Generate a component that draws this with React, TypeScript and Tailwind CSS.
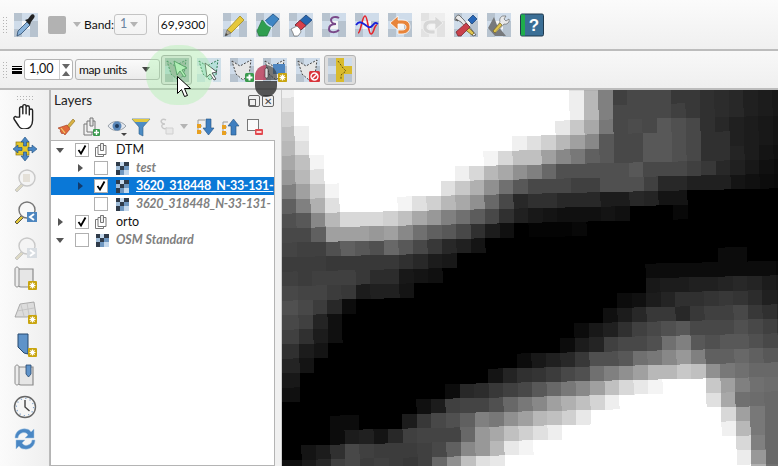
import { ReactNode } from "react";

// grey values of the raster cells (hex, "xx*n" repeats a value), row by row
const RASTER = [
  "f0 ff*19 e0 b0 80 40 40 40 40 38 38 30 2c 28 20 1c 18",
  "e0 ff*19 ee b8 80 40 48 48 48 38 38 30 2c 28 20 1c 18",
  "d0 ff*19 ee b8 80 48 48 48 48 40 38 30 2c 28 20 1c 18",
  "c0 ee ff*17 e8 c8 a8 78 48 4c 48 58 50 48 30 28 20 1c 18 14",
  "b8 e0 ff*14 f0 e0 d0 b8 a0 88 58 48 48 58 58 50 48 30 30 20 1c 18 14",
  "a8 c0 f4 ff*11 f4 d8 c0 c0 a0 88 78 60 58 48 48 58 58 50 48 30 30 24 1c 14 10",
  "98 b8 e0 ff*9 f0 d8 b8 a8 90 80 68 50 50 50 50 50 58 48 48 48 40 38 28 20 18 10 0c",
  "80 a0 c8 f4 ff*7 e0 c8 b0 90 70 58 48 48 48 40 40 50 50 50 40 28 28 20 20 20 14 10 0c 0a",
  "60 80 b0 e0 ff*4 f4 e0 d0 b8 a8 90 68 48 28 30 30 28 28 28 1c 1c 28 24 14 14 00*7",
  "50 58 88 b8 d8 d8 d8 d0 c0 a8 98 80 70 5c 48 30 20 18 14 10 10 10 14 10 00 00 00 08 00*7",
  "48 48 60 a0 a0 a0 98 a0 88 70 60 58 48 30 1c 10 00 04 04 04 08 00*14",
  "44 40 40 50 60 58 50 68 58 48 38 28 20 14 00*21",
  "3c 3c 3c 38 38 38 38 38 30 28 1c 18 00*18 0c 0c 00*3",
  "40 3c 40 40 40 38 2c 2c 18 14 10 00*14 0c*9 08",
  "48 44 44 3c 38 1c 20 20 14 00*16 18 1c 1c 20 20 24 28 24 1c 18",
  "50 48 3c 28 0c 00*18 0c 10 1c 24 30 30 34 38 34 2c 20 1c",
  "48 40 24 10 00*18 10 1c 28 38 38 28 38 40 40 48 38 30 24",
  "40 30 1c 10 00*16 0c 18 20 30 40 48 50 58 48 48 48 50 48 40 34",
  "30 1c 14 00*16 0c 1c 24 40 48 48 50 70 80 58 50 58 58 50 48 40",
  "24 14 00*14 0c 18 20 28 38 50 50 58 70 78 88 98 80 60 60 68 60 58 50",
  "18 00*13 14 24 30 34 3c 48 50 70 80 90 a0 b8 b8 c8 c0 90 78 70 68 68 60",
  "10 00*10 0c 28 2c 38 40 48 58 68 78 88 a0 c0 d8 e8 f4 ff ff ff c8 a0 80 70 6c 68",
  "00*9 10 1c 40 44 44 50 68 78 88 a0 b0 c0 d4 ee ff*6 e0 a8 70 6c 68 60",
  "00*3 0c 0c 00*3 1c 38 48 50 60 80 78 90 a0 b8 c0 d0 e8 ff*9 d8 a0 78 68 60",
  "00*3 0c 1c 20 14 28 40 44 44 44 68 98 a8 c0 d0 e0 ee ff*11 f0 b8 78 68 60",
  "00 14 1c 30 48 40 3c 3c 3c 40 48 60 88 98 b8 e8 f4 ff*14 d8 80 68 60",
  "10 1c 28 40 48 3c 40 3c 38 40 68 90 c0 e0 e8 ff*16 ec 98 68 58",
  "20 28 40 48 48 48 48 40 68 90 c0 f0 ff*20 b0 70 60",
  "20 28 40 48 48 48 48 40 68 90 c0 f0 ff*20 b0 70 60",
];

function parseRow(row: string) {
  const out: string[] = [];
  row.split(" ").forEach((t) => {
    const [v, n] = t.split("*");
    for (let i = 0; i < (n ? Number(n) : 1); i++) out.push(v);
  });
  return out;
}

function MapRaster() {
  return (
    <svg viewBox="282 90 496 376" width="496" height="376" className="block" shapeRendering="crispEdges">
      <rect x="282" y="90" width="496" height="376" fill="#000" />
      <g transform="rotate(-1.26 282 90)">
        {RASTER.map((row, k) =>
          parseRow(row).map((v, c) => (
            <rect
              key={`${k}-${c}`}
              x={c === 0 ? 250 : 279 + 14.5 * c}
              y={83.2 + 14.5 * k}
              width={c === 0 ? 44 : 15}
              height={15}
              fill={`#${v}${v}${v}`}
            />
          )),
        )}
      </g>
    </svg>
  );
}

function Checker({ fade }: { fade?: boolean }) {
  const a = fade ? "#e2e2e2" : "#b7c3cf";
  const b = fade ? "#eeeeee" : "#cfdcea";
  return (
    <>
      <rect x="0" y="0" width="8" height="8" fill={a} />
      <rect x="8" y="0" width="8" height="8" fill={b} />
      <rect x="16" y="0" width="8" height="8" fill={b} />
      <rect x="0" y="8" width="8" height="8" fill={b} />
      <rect x="16" y="8" width="8" height="8" fill={a} />
      <rect x="0" y="16" width="8" height="8" fill={a} />
      <rect x="8" y="16" width="8" height="8" fill={b} />
      <rect x="16" y="16" width="8" height="8" fill={a} />
    </>
  );
}

function Icon({ children, checker = true, fade, size = 24 }: { children?: ReactNode; checker?: boolean; fade?: boolean; size?: number }) {
  return (
    <svg viewBox="0 0 24 24" width={size} height={size} className="block shrink-0">
      {checker && <Checker fade={fade} />}
      {children}
    </svg>
  );
}

const Badge = ({ color = "#c9a50f" }: { color?: string }) => (
  <g>
    <rect x="15" y="15" width="9" height="9" rx="1" fill={color} />
    <path d="M19.5 16.5v6M16.5 19.5h6M17.4 17.4l4.2 4.2M21.6 17.4l-4.2 4.2" stroke="#fff" strokeWidth="1.2" />
  </g>
);

const DashedShape = () => (
  <path d="M2 3l8 5 11-6-2 15-6 5-7-6z" fill="#e6e6e6" stroke="#444" strokeWidth="1" strokeDasharray="2 1.5" />
);

const TopIcons = [
  // pencil
  <Icon key="pencil">
    <path d="M4 17L17 3l4 4L8 20z" fill="#e6c83c" stroke="#a38c1e" strokeWidth="0.8" />
    <path d="M4 17l-2 6 6-3z" fill="#b0a890" stroke="#666" strokeWidth="0.6" />
    <path d="M2 23l1-3 2 2z" fill="#444" />
  </Icon>,
  // toggle editing
  <Icon key="edit">
    <path d="M1 18l5-11 9 7-4 9H3z" fill="#2f9e4f" stroke="#1d6b33" strokeWidth="0.6" />
    <path d="M9 8l8-7 6 5-7 8z" fill="#3f86c4" stroke="#1e4f80" strokeWidth="0.8" />
    <path d="M9 8c1 3 4 5 7 6" fill="none" stroke="#bde0f5" strokeWidth="1.4" />
  </Icon>,
  // eraser
  <Icon key="eraser">
    <path d="M6 12l11-10 6 5-11 10z" fill="#2767b0" stroke="#123a6b" strokeWidth="0.7" />
    <path d="M6 12l5-4.6 6 5L12 17z" fill="#d8404a" stroke="#7e1f26" strokeWidth="0.7" />
    <path d="M2 16l6-3 3 3 1 3-3 4H5l-1-3z" fill="#fff" stroke="#555" strokeWidth="0.6" />
  </Icon>,
  // epsilon
  <Icon key="eps">
    <path d="M17 5c-3-2-8-1-8 2 0 3 3 4 5 4-3 0-7 1-7 5 0 4 7 4 10 1" fill="none" stroke="#7a4a8a" strokeWidth="2" />
  </Icon>,
  // curve
  <Icon key="wave">
    <path d="M3 20c3 0 4-17 7-17s3 18 6 18c3 0 3-9 6-9" fill="none" stroke="#e4262c" strokeWidth="1.6" />
    <path d="M1 12c3-4 5-3 8-1s5 5 8 2 3-4 6-2" fill="none" stroke="#1820d8" strokeWidth="1.8" />
  </Icon>,
  // undo
  <Icon key="undo">
    <path d="M2 10l8-7v4h4c6 0 8 3 8 7s-3 7-8 7h-4v-4h4c3 0 4-1 4-3s-2-3-4-3h-4v6z" fill="#e8843a" stroke="#fff" strokeWidth="0.8" />
  </Icon>,
  // redo, disabled
  <Icon key="redo" fade>
    <path d="M22 10l-8-7v4h-4c-6 0-8 3-8 7s3 7 8 7h4v-4h-4c-3 0-4-1-4-3s2-3 4-3h4v6z" fill="#d6d6d6" stroke="#f2f2f2" strokeWidth="0.8" />
  </Icon>,
  // tools
  <Icon key="tools">
    <path d="M5 2l5 5 12 15-3 1L7 9 2 6 4 8l-3-1c0-3 2-5 4-5z" fill="#e8e8e8" stroke="#444" strokeWidth="0.7" />
    <path d="M9 15l3-3 8 8-2 2z" fill="#e0c450" stroke="#6b5a10" strokeWidth="0.7" />
    <path d="M14 7l5-5 4 4-5 5z" fill="#2767b8" stroke="#123a6b" strokeWidth="0.7" />
    <path d="M2 19l10-9 4 4-9 9H4z" fill="#c9414b" stroke="#6e1f26" strokeWidth="0.7" />
  </Icon>,
  // settings
  <Icon key="wrench">
    <path d="M1 15l6-11 3 8 9 11H8z" fill="#77797c" />
    <path d="M16 3l3 0-2 3 2 2 3-2c1 3-2 6-5 5L9 20l-3-2 7-9c-1-3 1-6 3-6z" fill="#e9e9e9" stroke="#555" strokeWidth="0.6" />
    <path d="M6 18l7-8 2 2-7 8z" fill="#e0c450" stroke="#6b5a10" strokeWidth="0.6" />
  </Icon>,
  // help
  <Icon key="help" checker={false}>
    <rect x="0.5" y="1" width="23" height="22" rx="1.5" fill="#3b6f96" stroke="#203a4e" />
    <rect x="1" y="1.5" width="4" height="21" fill="#1fae4c" />
    <text x="14" y="18" fontSize="17" fontWeight="700" textAnchor="middle" fill="#fff" fontFamily="'Liberation Sans', sans-serif">?</text>
  </Icon>,
];

function Grip({ horizontal }: { horizontal?: boolean }) {
  const dots = Array.from({ length: 6 });
  return (
    <div className={horizontal ? "flex flex-col gap-[2px]" : "flex gap-[2px]"}>
      {[0, 1].map((i) => (
        <div key={i} className={horizontal ? "flex gap-[2px]" : "flex flex-col gap-[2px]"}>
          {dots.map((_, j) => (
            <div key={j} className="w-px h-px bg-[#b4b4b4]" />
          ))}
        </div>
      ))}
    </div>
  );
}

function Caret({ color = "#555" }: { color?: string }) {
  return (
    <svg viewBox="0 0 8 5" width="8" height="5" className="block shrink-0">
      <path d="M0 0h8L4 5z" fill={color} />
    </svg>
  );
}

function SelectIcon({ solid }: { solid?: boolean }) {
  return (
    <Icon checker={false}>
      <rect x="0" y="0" width="24" height="24" fill={solid ? "#a7b8b4" : "#cfdfe8"} />
      <rect x="0" y="8" width="8" height="8" fill={solid ? "#b5d5d5" : "#e9eef2"} />
      <rect x="8" y="16" width="8" height="8" fill={solid ? "#b5c9c5" : "#e9eef2"} />
      <path d="M2 3l8 5 11-6-2 15-6 5-7-6z" fill={solid ? "#98aaa0" : "#b6e0da"} stroke="#2c7a50" strokeWidth="1" strokeDasharray="2 1.5" />
      <path d={solid ? "M9 3l13 7-5 2 4 6-2 1-4-6-3 4z" : "M8 5l12 9-5 1 4 6-2 1-4-6-3 3z"} fill={solid ? "#b9eec0" : "#fff"} stroke={solid ? "#1f6b3a" : "#333"} strokeWidth="0.8" />
    </Icon>
  );
}

function ExtraToolbar() {
  return (
    <div className="flex items-center h-[37px]">
      <div className="ml-[3px]">
        <Grip />
      </div>
      <div className="ml-[5px] w-[10px] flex flex-col gap-[1px]">
        <div className="h-[1px] bg-black" />
        <div className="h-[2px] bg-black" />
        <div className="h-[3px] bg-black" />
      </div>
      <div className="ml-[2px] w-[49px] h-[21px] flex items-center bg-white border border-[#b4b4b4] rounded-[3px]">
        <span className="pl-[4px] flex-1 text-[12.5px] text-[#111]">1,00</span>
        <div className="w-[13px] h-full border-l border-[#cfcfcf] flex flex-col items-center justify-center gap-[2px]">
          <Caret color="#666" />
          <div className="rotate-180 h-[5px]">
            <Caret color="#666" />
          </div>
        </div>
      </div>
      <div className="ml-[2px] w-[85px] h-[21px] flex items-center justify-between pl-[3px] pr-[9px] bg-linear-to-b from-[#fafafa] to-[#ebebeb] border border-[#b4b4b4] rounded-[3px]">
        <span className="text-[12px] tracking-[-0.4px] text-[#111]">map units</span>
        <Caret color="#444" />
      </div>
      <div className="ml-[1px] w-[31px] h-[30px] flex items-center justify-center bg-[#e2e2e2] border border-[#a8a8a8] rounded-[3px]">
        <SelectIcon solid />
      </div>
      <div className="ml-[5px]">
        <SelectIcon />
      </div>
      <div className="ml-[9px]">
        <Icon>
          <DashedShape />
          <rect x="15" y="15" width="9" height="9" rx="1.5" fill="#3a9a4e" />
          <path d="M19.5 16.5v6M16.5 19.5h6" stroke="#fff" strokeWidth="2" />
        </Icon>
      </div>
      <div className="ml-[9px]">
        <Icon>
          <DashedShape />
          <rect x="10" y="6" width="12" height="10" fill="#4f86c0" />
          <Badge />
        </Icon>
      </div>
      <div className="ml-[9px]">
        <Icon>
          <DashedShape />
          <rect x="13" y="13" width="11" height="11" rx="1.5" fill="#d9343a" />
          <circle cx="18.5" cy="18.5" r="3.5" fill="none" stroke="#fff" strokeWidth="1.4" />
          <path d="M16 21l5-5" stroke="#fff" strokeWidth="1.4" />
        </Icon>
      </div>
      <div className="ml-[4px] w-[32px] h-[30px] flex items-center justify-center bg-[#dedede] border border-[#b4b4b4] rounded-[3px]">
        <Icon>
          <path d="M8 0h8v8h8v8h-8v8H8z" fill="#d9bb2e" />
          <path d="M10 3l5 7 3 3-5 4v4" fill="none" stroke="#443a08" strokeWidth="0.8" strokeDasharray="2 1.5" />
        </Icon>
      </div>
    </div>
  );
}

function Magnifier({ dim, children }: { dim?: boolean; children?: ReactNode }) {
  return (
    <Icon checker={false}>
      <path d="M9 14l-7 7 2 2 7-7z" fill={dim ? "#dcd8c4" : "#e2c63a"} stroke={dim ? "#bbb" : "#222"} strokeWidth="0.7" />
      <circle cx="14" cy="9" r="8" fill={dim ? "#f4f4f4" : "#f8f8f8"} stroke={dim ? "#c8c8c8" : "#777"} strokeWidth="1.4" />
      {children}
    </Icon>
  );
}

function ScrollShape() {
  return (
    <g>
      <path d="M5 3h15v18H8c-2 0-3-1-3-2z" fill="#e6e6e6" stroke="#8c8c8c" strokeWidth="1.2" />
      <path d="M2 3c0-1 1-2 2-2s2 1 2 2v16c0 1-1 2-2 2s-2-1-2-2z" fill="#ececec" stroke="#8c8c8c" strokeWidth="1" />
    </g>
  );
}

function LeftToolbar() {
  return (
    <div className="w-[51px] shrink-0 flex flex-col items-center bg-linear-to-r from-[#fbfbfb] to-[#efefef] border-r-2 border-[#b9b9b9]">
      <div className="mt-[6px]">
        <Grip horizontal />
      </div>
      <div className="mt-[3px]">
        <Icon checker={false} size={26}>
          <path d="M7 13V5c0-2 3-2 3 0v5-7c0-2 3-2 3 0v7-6c0-2 3-2 3 0v7-4c0-2 3-2 3 0v9c0 5-3 8-7 8-3 0-5-1-6-3l-4-6c-1-2 1-3 2-2z" fill="#fff" stroke="#222" strokeWidth="1.3" strokeLinejoin="round" />
        </Icon>
      </div>
      <div className="mt-[8px]">
        <Icon checker={false}>
          <rect x="3" y="5" width="13" height="13" fill="#e6c82a" stroke="#8a7610" strokeWidth="0.7" />
          <path d="M12 0l4 5h-2.500v4h-3V5H8zM12 24l4-5h-2.500v-4h-3v4H8zM0 12l5-4v2.500h4v3H5V16zM24 12l-5-4v2.500h-4v3h4V16z" fill="#4a87c4" stroke="#1f4e7d" strokeWidth="0.6" />
        </Icon>
      </div>
      <div className="mt-[8px]">
        <Magnifier dim>
          <rect x="10" y="5" width="7" height="8" fill="#e4e0d8" />
        </Magnifier>
      </div>
      <div className="mt-[8px]">
        <Magnifier>
          <rect x="14" y="11" width="10" height="10" fill="#4d86bf" />
          <path d="M21 13l-4 3 4 3" fill="none" stroke="#fff" strokeWidth="2" />
        </Magnifier>
      </div>
      <div className="mt-[12px]">
        <Magnifier dim>
          <rect x="14" y="11" width="10" height="10" fill="#d8dde2" />
          <path d="M17 13l4 3-4 3" fill="none" stroke="#fff" strokeWidth="2" />
        </Magnifier>
      </div>
      <div className="mt-[5px]">
        <Icon checker={false}>
          <ScrollShape />
          <Badge />
        </Icon>
      </div>
      <div className="mt-[10px]">
        <Icon checker={false}>
          <path d="M2 17l5-13 14-2 2 13-9 2z" fill="#dcdcdc" stroke="#9a9a9a" strokeWidth="0.8" />
          <path d="M8 5l3 11M14 3l2 12M4 11l17-3" stroke="#bcbcbc" strokeWidth="0.7" />
          <Badge />
        </Icon>
      </div>
      <div className="mt-[9px]">
        <Icon checker={false}>
          <path d="M5 1h10v20l-4-1-6-6z" fill="#5f93c9" stroke="#26486e" strokeWidth="1" />
          <Badge />
        </Icon>
      </div>
      <div className="mt-[7px]">
        <Icon checker={false}>
          <ScrollShape />
          <path d="M13 1h5v9l-2.500 3-2.500-3z" fill="#5f93c9" stroke="#26486e" strokeWidth="0.8" />
        </Icon>
      </div>
      <div className="mt-[7px]">
        <Icon checker={false}>
          <circle cx="12" cy="12" r="10.5" fill="#f6f6f6" stroke="#666" strokeWidth="1.4" />
          <circle cx="12" cy="12" r="8.6" fill="none" stroke="#7ca0c8" strokeWidth="1.2" strokeDasharray="1.2 3.3" />
          <path d="M12 5v7l4.500 4" fill="none" stroke="#444" strokeWidth="1.4" />
        </Icon>
      </div>
      <div className="mt-[8px]">
        <Icon checker={false}>
          <path d="M2 11c0-6 5-10 11-9 2 0 4 1 5 3l3-3v9h-9l3-3c-2-3-5-3-8-1-1 1-2 2-2 4z" fill="#4a87c4" stroke="#9cc0e0" strokeWidth="0.5" />
          <path d="M22 13c0 6-5 10-11 9-2 0-4-1-5-3l-3 3v-9h9l-3 3c2 3 5 3 8 1 1-1 2-2 2-4z" fill="#4a87c4" stroke="#9cc0e0" strokeWidth="0.5" />
        </Icon>
      </div>
    </div>
  );
}

function PanelIcon({ children }: { children: ReactNode }) {
  return (
    <svg viewBox="0 0 20 20" width="20" height="20" className="block shrink-0">
      {children}
    </svg>
  );
}

function PanelToolbar() {
  return (
    <div className="h-[27px] flex items-center pl-[4px]">
      <div className="ml-[1px]">
        <PanelIcon>
          <path d="M11 9l6-7 2 2-6 7z" fill="#d9b243" stroke="#8a6a1c" strokeWidth="0.6" />
          <path d="M2 11l9-3 3 4-5 6-2-2-1 1-2-3 1-1z" fill="#e06a3a" stroke="#a23c20" strokeWidth="0.6" />
          <path d="M5 11l4 5" stroke="#f0d070" strokeWidth="1.2" />
        </PanelIcon>
      </div>
      <div className="ml-[5px]">
        <PanelIcon>
          <path d="M3 7h8v11H3z" fill="#f2f2f2" stroke="#777" />
          <path d="M6 4h8v11H6z" fill="#f2f2f2" stroke="#777" />
          <path d="M9 1h3v8H9z" fill="#e8e8e8" stroke="#777" />
          <rect x="12" y="12" width="7" height="7" rx="1" fill="#3a9a4e" />
          <path d="M15.500 13v5M13 15.500h5" stroke="#fff" strokeWidth="1.4" />
        </PanelIcon>
      </div>
      <div className="ml-[6px] relative">
        <PanelIcon>
          <path d="M1 9c4-6 13-6 18 0-5 6-14 6-18 0z" fill="#e4e8ee" stroke="#9aa2aa" />
          <circle cx="10" cy="9" r="4.500" fill="#5886b8" />
          <circle cx="10" cy="9" r="2" fill="#1e3a5c" />
          <path d="M14 16h6l-3 3z" fill="#444" />
        </PanelIcon>
      </div>
      <div className="ml-[4px]">
        <PanelIcon>
          <path d="M1 2h18l-7 8v9l-4-2v-7z" fill="#4c8cc4" stroke="#2c5e8c" strokeWidth="0.6" />
          <path d="M1 2h18l-3 3H4z" fill="#e2c840" />
        </PanelIcon>
      </div>
      <div className="ml-[6px]">
        <PanelIcon>
          <path d="M9 3C5 1 3 4 5 6c1 1 2 1 3 1-2 0-4 1-3 3 1 2 3 2 5 1" fill="none" stroke="#c8c8c8" strokeWidth="1.4" />
          <path d="M9 11h7v6H9z" fill="#e8e8e8" stroke="#d0d0d0" />
        </PanelIcon>
      </div>
      <div className="ml-[3px]">
        <Caret color="#b4b4b4" />
      </div>
      <div className="ml-[8px]">
        <PanelIcon>
          <path d="M2 3h7M2 3v14M2 9h4M2 15h4" stroke="#999" fill="none" />
          <rect x="1" y="7" width="4" height="4" fill="#e8a020" />
          <rect x="1" y="13" width="4" height="4" fill="#e8a020" />
          <path d="M10 2h5v9h3l-5.500 7L7 11h3z" fill="#3f7fc0" stroke="#24507e" strokeWidth="0.6" />
        </PanelIcon>
      </div>
      <div className="ml-[5px]">
        <PanelIcon>
          <path d="M2 5h5M2 5v13M2 10h4M2 16h4" stroke="#999" fill="none" />
          <rect x="1" y="8" width="4" height="4" fill="#e8a020" />
          <rect x="1" y="14" width="4" height="4" fill="#e8a020" />
          <path d="M10 18h5V9h3l-5.500-7L7 9h3z" fill="#3f7fc0" stroke="#24507e" strokeWidth="0.6" />
        </PanelIcon>
      </div>
      <div className="ml-[4px]">
        <PanelIcon>
          <rect x="2.500" y="2.500" width="11" height="11" fill="#fafafa" stroke="#777" />
          <rect x="10" y="12" width="8" height="6" rx="1" fill="#e2484e" />
          <path d="M11.500 15h5" stroke="#fff" strokeWidth="1.6" />
        </PanelIcon>
      </div>
    </div>
  );
}

function RasterGlyph() {
  return (
    <svg viewBox="0 0 13 13" width="13" height="13" className="block shrink-0">
      <rect x="0" y="0" width="4" height="4" fill="#2f3b4a" />
      <rect x="4" y="0" width="4" height="4" fill="#c4d8ec" />
      <rect x="8" y="0" width="5" height="4" fill="#2f3b4a" />
      <rect x="0" y="4" width="4" height="4" fill="#9fbcd8" />
      <rect x="4" y="4" width="4" height="4" fill="#2f3b4a" />
      <rect x="8" y="4" width="5" height="4" fill="#6f97c0" />
      <rect x="0" y="8" width="4" height="5" fill="#2f3b4a" />
      <rect x="4" y="8" width="4" height="5" fill="#6f97c0" />
      <rect x="8" y="8" width="5" height="5" fill="#c4d8ec" />
    </svg>
  );
}

function GroupGlyph() {
  return (
    <svg viewBox="0 0 14 14" width="14" height="14" className="block shrink-0">
      <path d="M.5 4.500h8v9h-8z" fill="#fff" stroke="#777" />
      <path d="M3 2.500h8v9H3z" fill="#fff" stroke="#777" />
      <path d="M5.500.5h3v7h-3z" fill="#eee" stroke="#777" />
    </svg>
  );
}

function Arrow({ dir, dark }: { dir?: "down" | "right"; dark?: boolean }) {
  return (
    <div className="w-[8px] flex justify-center shrink-0">
      {dir === "down" && (
        <svg viewBox="0 0 8 5" width="8" height="5" className="block">
          <path d="M0 0h8L4 5z" fill="#555" />
        </svg>
      )}
      {dir === "right" && (
        <svg viewBox="0 0 5 8" width="5" height="8" className="block">
          <path d="M0 0l5 4-5 4z" fill={dark ? "#123a6b" : "#555"} />
        </svg>
      )}
    </div>
  );
}

function Check({ on }: { on?: boolean }) {
  return (
    <div className="w-[14px] h-[14px] shrink-0 bg-white border border-[#b0b0b0] flex items-center justify-center">
      {on && (
        <svg viewBox="0 0 12 12" width="12" height="12" className="block">
          <path d="M2.500 6l2.500 3.500L9.500 1.500" fill="none" stroke="#000" strokeWidth="1.8" />
        </svg>
      )}
    </div>
  );
}

type RowProps = {
  child?: boolean;
  dir?: "down" | "right";
  on?: boolean;
  glyph: "raster" | "group";
  label: string;
  tone?: "group" | "off" | "selected";
  tight?: boolean;
};

function LayerRow({ child, dir, on, glyph, label, tone = "group", tight }: RowProps) {
  const isSel = tone === "selected";
  const text =
    tone === "group"
      ? "text-[#111] font-normal"
      : tone === "off"
        ? "text-[#808080] font-bold italic"
        : "text-white font-bold underline";
  return (
    <div className={`h-[18px] flex items-center overflow-hidden whitespace-nowrap ${isSel ? "bg-[#0a78d7]" : ""} ${child ? "pl-[25px]" : "pl-[5px]"}`}>
      <Arrow dir={dir} dark={isSel} />
      <div className={child ? "ml-[10px]" : "ml-[11px]"}>
        <Check on={on} />
      </div>
      <div className={child ? "ml-[8px]" : glyph === "group" ? "ml-[6px]" : "ml-[7px]"}>{glyph === "group" ? <GroupGlyph /> : <RasterGlyph />}</div>
      <span className={`ml-[7px] mt-[-1px] text-[12.5px] leading-[18px] ${tight ? "tracking-[-0.32px]" : ""} ${text}`}>{label}</span>
    </div>
  );
}

function LayersPanel() {
  return (
    <div className="w-[230px] shrink-0 flex flex-col bg-[#f0f0f0]">
      <div className="h-[23px] flex items-center justify-between pl-[3px] pr-[2px] w-[225px]">
        <span className="text-[13.5px] text-[#222] mt-[-2px]">Layers</span>
        <div className="flex gap-[2px] mt-[-2px]">
          <div className="w-[12px] h-[12px] border border-[#666] rounded-[2px] flex items-end justify-start">
            <div className="w-[7px] h-[7px] border border-[#666] bg-[#f0f0f0]" />
          </div>
          <div className="w-[12px] h-[12px] border border-[#666] rounded-[2px] flex items-center justify-center text-[10px] leading-none text-[#444]">
            ✕
          </div>
        </div>
      </div>
      <PanelToolbar />
      <div className="w-[225px] flex-1 bg-white border border-[#b4b4b4] ml-[-1px] overflow-hidden">
        <LayerRow dir="down" on glyph="group" label="DTM" />
        <LayerRow child dir="right" glyph="raster" label="test" tone="off" />
        <LayerRow child dir="right" on glyph="raster" label="3620_318448_N-33-131-" tone="selected" tight />
        <LayerRow child glyph="raster" label="3620_318448_N-33-131-" tone="off" tight />
        <LayerRow dir="right" on glyph="group" label="orto" />
        <LayerRow dir="down" glyph="raster" label="OSM Standard" tone="off" />
      </div>
    </div>
  );
}

export default function App() {
  return (
    <div className="relative w-[778px] h-[466px] overflow-hidden flex flex-col bg-[#f0f0f0] font-['Lato',sans-serif]">
      {/* digitizing toolbar */}
      <div className="h-[49px] flex items-center bg-linear-to-b from-[#fbfbfb] to-[#f0f0f0]">
        <div className="ml-[3px]">
          <Grip />
        </div>
        <div className="ml-[7px]">
          <Icon>
            <path d="M4 18L13 9l3 3-9 9-4 2z" fill="#8ab4dc" stroke="#2c4a6c" strokeWidth="0.8" />
            <path d="M11 7l3-1 3-4c2-2 5 1 3 3l-3 4-1 3z" fill="#222" />
          </Icon>
        </div>
        <div className="ml-[10px] w-[18px] h-[18px] rounded-[2px] bg-[#b2b2b2]" />
        <div className="ml-[7px]">
          <Caret color="#b4b4b4" />
        </div>
        <span className="ml-[3px] w-[27px] text-[12px] whitespace-nowrap text-[#111]">Band:</span>
        <div className="ml-[3px] w-[33px] h-[21px] flex items-center justify-between pl-[5px] pr-[8px] border border-[#c4c4c4] rounded-[3px]">
          <span className="text-[12.5px] text-[#6c84a0]">1</span>
          <Caret color="#b4b4b4" />
        </div>
        <div className="ml-[11px] w-[50px] h-[21px] flex items-center justify-center bg-white border border-[#b4b4b4] rounded-[3px]">
          <span className="text-[12px] text-[#111]">69,9300</span>
        </div>
        <div className="ml-[15px] flex gap-[9px]">{TopIcons}</div>
      </div>
      <div className="h-[2px] bg-[#bcbcbc]" />
      <div className="bg-linear-to-b from-[#f8f8f8] to-[#efefef]">
        <ExtraToolbar />
      </div>
      <div className="h-[2px] bg-[#bcbcbc]" />
      <div className="flex-1 flex min-h-0">
        <LeftToolbar />
        <LayersPanel />
        <div className="flex-1 border-l border-[#cccccc] overflow-hidden">
          <MapRaster />
        </div>
      </div>

      {/* screen-recording highlight around the pointer */}
      <div className="absolute left-[146px] top-[45px] w-[66px] h-[60px] rounded-full bg-[#a0f0a0]/35 pointer-events-none" />
      <svg viewBox="0 0 22 32" width="22" height="32" className="absolute left-[255px] top-[65px] pointer-events-none">
        <path d="M11 0C5 0 0 5 0 11v4h11z" fill="#b8405c" fillOpacity="0.85" />
        <path d="M11 0c6 0 11 5 11 11v4H11z" fill="#3a3a3a" fillOpacity="0.65" />
        <path d="M0 16h22v5c0 6-5 11-11 11S0 27 0 21z" fill="#2e2e2e" fillOpacity="0.8" />
        <rect x="10" y="3" width="3" height="10" rx="1.500" fill="#dddddd" stroke="#333" strokeWidth="0.6" />
      </svg>
      <svg viewBox="0 0 14 22" width="14" height="22" className="absolute left-[177px] top-[76px] pointer-events-none">
        <path d="M.5.5v17l4-4 3 7 3-1-3-7h6z" fill="#fff" stroke="#000" strokeWidth="1" />
      </svg>
    </div>
  );
}
